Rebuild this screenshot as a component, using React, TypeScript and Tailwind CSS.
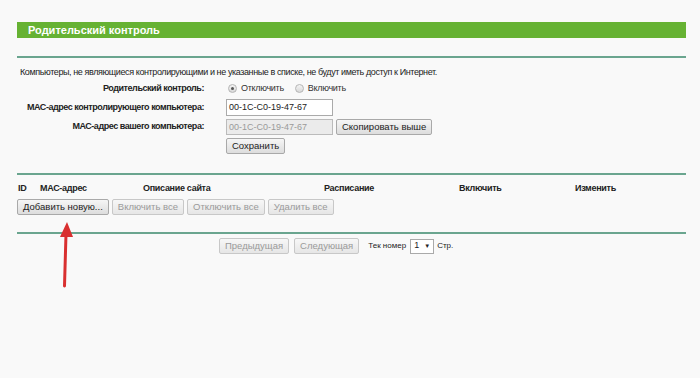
import React from "react";

const btn =
  "h-[16px] px-[5px] border border-[#a9a9a9] rounded-[2px] bg-gradient-to-b from-[#f6f6f6] to-[#dddddd] text-[9.5px] leading-[14px] text-[#222] flex items-center whitespace-nowrap";
const btnDis =
  "h-[16px] px-[5px] border border-[#c8c8c8] rounded-[2px] bg-gradient-to-b from-[#f7f7f7] to-[#e6e6e6] text-[9.5px] leading-[14px] text-[#9a9a9a] flex items-center whitespace-nowrap";

const label =
  "h-[17px] text-right font-bold text-[9px] leading-[17px] whitespace-nowrap tracking-[-0.45px]";

function Radio({ on }: { on?: boolean }) {
  return (
    <span className="w-[9px] h-[9px] rounded-full border border-[#b5b5b5] bg-gradient-to-b from-[#f4f4f4] to-[#d8d8d8] flex items-center justify-center">
      {on && <span className="w-[3px] h-[3px] rounded-full bg-[#555]" />}
    </span>
  );
}

export default function App() {
  return (
    <div
      className="relative w-[700px] h-[378px] bg-[#f9f9f9] overflow-hidden text-[#222]"
      style={{ fontFamily: '"Liberation Sans", Arial, sans-serif' }}
    >
      <div className="ml-[17px] w-[669px] pt-[22px] flex flex-col">
        <div className="h-[16px] bg-[#66b233] flex items-center pl-[11px]">
          <span className="text-white font-bold text-[11px] leading-none">Родительский контроль</span>
        </div>
        <div className="mt-[18px] h-[2px] bg-[#6aa58f]" />
        <div className="mt-[8px] h-[12px] text-[9px] leading-[12px] pl-[3px] whitespace-nowrap tracking-[-0.4px]">
          Компьютеры, не являющиеся контролирующими и не указанные в списке, не будут иметь доступ к Интернет.
        </div>
        <div className="mt-[2px] grid grid-cols-[187px_1fr] gap-x-[22px] gap-y-[2px] items-center">
          <div className={label}>Родительский контроль:</div>
          <div className="h-[17px] flex items-center text-[9px] text-[#333] tracking-[-0.3px]">
            <span className="ml-[2px]"><Radio on /></span>
            <span className="ml-[4px]">Отключить</span>
            <span className="ml-[11px]"><Radio /></span>
            <span className="ml-[4px]">Включить</span>
          </div>
          <div className={label}>МАС-адрес контролирующего компьютера:</div>
          <div className="h-[17px] flex items-center">
            <div className="w-[107px] h-[17px] border border-[#aaa] bg-white text-[9px] leading-[15px] pl-[2px]">00-1C-C0-19-47-67</div>
          </div>
          <div className={label}>МАС-адрес вашего компьютера:</div>
          <div className="h-[17px] flex items-center gap-[3px]">
            <div className="w-[107px] h-[16px] border border-[#bbb] bg-[#ebebeb] text-[9px] leading-[14px] pl-[2px] text-[#9a9a9a]">00-1C-C0-19-47-67</div>
            <button className={btn}>Скопировать выше</button>
          </div>
          <div className="h-[17px]" />
          <div className="h-[17px] flex items-center">
            <button className={btn}>Сохранить</button>
          </div>
        </div>
        <div className="mt-[19px] h-[2px] bg-[#6aa58f]" />
        <div className="mt-[7px] h-[12px] grid grid-cols-[22px_103px_181px_135px_116px_1fr] pl-[1px] font-bold text-[9px] leading-[12px] tracking-[-0.3px]">
          <span>ID</span>
          <span>МАС-адрес</span>
          <span>Описание сайта</span>
          <span>Расписание</span>
          <span>Включить</span>
          <span>Изменить</span>
        </div>
        <div className="mt-[5px] flex gap-[3px]">
          <button className={btn}>Добавить новую...</button>
          <button className={btnDis}>Включить все</button>
          <button className={btnDis}>Отключить все</button>
          <button className={btnDis}>Удалить все</button>
        </div>
        <div className="mt-[17px] h-[2px] bg-[#6aa58f]" />
        <div className="mt-[4px] flex items-center pl-[202px] text-[9px]">
          <button className={btnDis}>Предыдущая</button>
          <button className={btnDis + " ml-[5px]"}>Следующая</button>
          <span className="ml-[9px] text-[8px]">Тек номер</span>
          <span className="ml-[4px] w-[24px] h-[15px] border border-[#aaa] bg-white flex items-center justify-between px-[3px] text-[9px]">
            <span>1</span>
            <span className="text-[6px]">▼</span>
          </span>
          <span className="ml-[3px] text-[8px]">Стр.</span>
        </div>
      </div>
      <svg className="absolute left-0 top-0 pointer-events-none" width="700" height="378">
        <path d="M64.5 286 L66 234" stroke="#d93030" strokeWidth="3" strokeLinecap="round" />
        <path d="M60 237 L67 222 L73 237 Z" fill="#d93030" />
      </svg>
    </div>
  );
}
